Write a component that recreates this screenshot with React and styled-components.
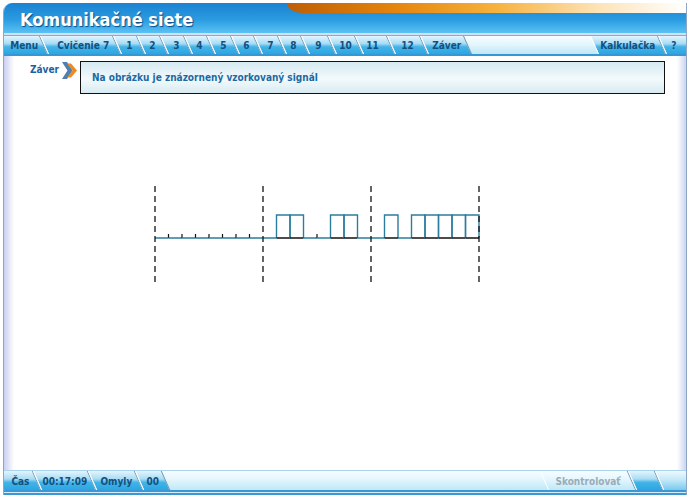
import React from "react";
import styled, { createGlobalStyle } from "styled-components";

const GlobalStyle = createGlobalStyle`
  html, body {
    margin: 0;
    padding: 0;
    background: #fff;
  }
  body {
    font-family: "DejaVu Sans Condensed", "DejaVu Sans", "Liberation Sans", sans-serif;
    font-stretch: condensed;
  }
`;

const Frame = styled.div`
  box-sizing: border-box;
  width: 684px;
  height: 492px;
  margin: 3px 0 0 3px;
  border-left: 1px solid #8ea6c6;
  border-right: 1px solid #8ea6c6;
  border-top-left-radius: 9px;
  overflow: hidden;
  display: flex;
  flex-direction: column;
`;

const Header = styled.div`
  position: relative;
  flex: none;
  height: 30px;
  padding-left: 16px;
  display: flex;
  align-items: center;
  background: linear-gradient(#1b82d2, #2a9be1 55%, #5ac2f3);

  /* orange swoosh in the top right corner */
  &::after {
    content: "";
    position: absolute;
    top: 0;
    right: 0;
    left: 283px;
    height: 10px;
    border-bottom-left-radius: 16px 10px;
    background: linear-gradient(to right, #bd5e05, #e5860f 28%, #f6b13c 52%, #fde3b8 78%, #fff);
  }
`;

const Title = styled.h1`
  margin: 2px 0 0 0;
  font-size: 18px;
  font-weight: bold;
  color: #fff;
  text-shadow: 1px 1px 1px #0b4b86;
`;

const HeaderEdge = styled.div`
  flex: none;
  height: 2px;
  background: #d6def6;
  border-bottom: 1px solid #6fb4e2;
`;

const Bar = styled.div`
  flex: none;
  height: ${(p) => p.$h}px;
  display: flex;
  overflow: hidden;
  background: linear-gradient(#f7fdff, #e4f6fd 45%, #bfe7f8);
`;

const Spacer = styled.div`
  flex: 1;
`;

const gradients = {
  blue: "linear-gradient(#e2f5fd, #a9dcf4 42%, #44b3e7 60%, #2aa6e2)",
  light: "linear-gradient(#f7fdff, #e4f6fd 45%, #bfe7f8)",
  mid: "linear-gradient(#eef9fe, #c4e9f8 45%, #79c9ee)",
};

const Tab = styled.div`
  flex: none;
  box-sizing: border-box;
  width: ${(p) => p.$w}px;
  margin-left: ${(p) => p.$ml || 0}px;
  margin-right: ${(p) => p.$mr || 0}px;
  height: 100%;
  display: flex;
  align-items: center;
  justify-content: center;
  transform: skewX(24deg);
  background: ${(p) => gradients[p.$variant || "blue"]};
  border-left: 1px solid #fff;
  border-right: 1px solid #6d93ae;
`;

const TabLabel = styled.span`
  transform: skewX(-24deg);
  margin-top: 1px;
  font-size: 10px;
  font-weight: bold;
  white-space: nowrap;
  color: ${(p) => (p.$muted ? "#9aacb7" : "#13507f")};
  padding-left: ${(p) => p.$pl || 0}px;
  padding-right: ${(p) => p.$pr || 0}px;
`;

const BlueRule = styled.div`
  flex: none;
  height: 2px;
  background: #3497d6;
`;

const Body = styled.div`
  flex: 1;
  padding: 5px 21px 0 26px;
  background: linear-gradient(to right, #c9cff0, #fff 10px, #fff calc(100% - 9px), #cdd3f2);
  border-bottom: 1px solid #a9d3ee;
`;

const Row = styled.div`
  display: flex;
  align-items: flex-start;
`;

const Label = styled.span`
  margin-top: 3px;
  font-size: 10px;
  font-weight: bold;
  color: #1d5f9f;
`;

const Chevron = styled.svg`
  flex: none;
  margin: 1px 3px 0 3px;
`;

const Box = styled.div`
  flex: 1;
  box-sizing: border-box;
  height: 33px;
  padding-left: 11px;
  display: flex;
  align-items: center;
  border: 1px solid #111;
  background: linear-gradient(#d5e9f1, #f3fafc 55%, #d8ebf2);
  font-size: 10px;
  font-weight: bold;
  color: #1b6aa3;
`;

const Chart = styled.svg`
  display: block;
  margin: 88px 0 0 120px;
`;

const BottomEdge = styled.div`
  flex: none;
  height: 1px;
  border-top: 2px solid #3a98d6;
  border-bottom: 2px solid #3a98d6;
  background: #d8ecf8;
`;

const topTabs = [
  { label: "Menu", w: 45, ml: -5, pl: 5 },
  { label: "Cvičenie 7", w: 73, pl: 4 },
  { label: "1", w: 24 },
  { label: "2", w: 23 },
  { label: "3", w: 24 },
  { label: "4", w: 23 },
  { label: "5", w: 24 },
  { label: "6", w: 23 },
  { label: "7", w: 24 },
  { label: "8", w: 23 },
  { label: "9", w: 27 },
  { label: "10", w: 27 },
  { label: "11", w: 32, pr: 6 },
  { label: "12", w: 33 },
  { label: "Záver", w: 44 },
];

const bottomTabs = [
  { label: "Čas", w: 38, ml: -5, pl: 5 },
  { label: "00:17:09", w: 55 },
  { label: "Omyly", w: 47 },
  { label: "00", w: 27 },
];

const BIT = 13.5;
const X0 = 5;
const BASE = 56;
const TOP = 33;
const TEAL = "#2a7d9c";
const bits = "00000000" + "01100110" + "01011111";

function Signal() {
  const items = [];
  for (let i = 0; i < bits.length; i++) {
    const x = X0 + i * BIT;
    if (bits[i] === "1") {
      items.push(
        <path key={"p" + i} d={`M${x} ${BASE}V${TOP}H${x + BIT}V${BASE}`} fill="none" stroke={TEAL} strokeWidth="1.4" />,
        <line key={"b" + i} x1={x} y1={BASE} x2={x + BIT} y2={BASE} stroke="#111" strokeWidth="1.4" />
      );
    } else {
      items.push(<line key={"z" + i} x1={x} y1={BASE} x2={x + BIT} y2={BASE} stroke={TEAL} strokeWidth="1.4" />);
    }
    const next = bits[i + 1];
    if (bits[i] === "0" && next === "0" && (i + 1) % 8 !== 0) {
      items.push(<line key={"t" + i} x1={x + BIT} y1={BASE - 4} x2={x + BIT} y2={BASE} stroke="#111" strokeWidth="1.2" />);
    }
  }
  const dashes = [0, 8, 16, 24].map((k) => (
    <line key={"d" + k} x1={X0 + k * BIT} y1="4" x2={X0 + k * BIT} y2="100" stroke="#111" strokeWidth="1.3" strokeDasharray="6 4" />
  ));
  return (
    <Chart width="340" height="104" viewBox="0 0 340 104">
      {items}
      {dashes}
    </Chart>
  );
}

export default function App() {
  return (
    <>
      <GlobalStyle />
      <Frame>
        <Header>
          <Title>Komunikačné siete</Title>
        </Header>
        <HeaderEdge />
        <Bar $h={18}>
          {topTabs.map((t) => (
            <Tab key={t.label} $w={t.w} $ml={t.ml}>
              <TabLabel $pl={t.pl} $pr={t.pr}>{t.label}</TabLabel>
            </Tab>
          ))}
          <Spacer />
          <Tab $w={68}>
            <TabLabel>Kalkulačka</TabLabel>
          </Tab>
          <Tab $w={29} $mr={-5}>
            <TabLabel $pr={5}>?</TabLabel>
          </Tab>
        </Bar>
        <BlueRule />
        <Body>
          <Row>
            <Label>Záver</Label>
            <Chevron width="15" height="17" viewBox="0 0 15 17">
              <polygon points="0,0 5,0 10.5,8.5 5,17 0,17 5.5,8.5" fill="#4f7fb0" />
              <polygon points="5,1.5 9,1.5 15,8.5 9,15.5 5,15.5 10.5,8.5" fill="#ef8a22" />
            </Chevron>
            <Box>Na obrázku je znázornený vzorkovaný signál</Box>
          </Row>
          <Signal />
        </Body>
        <Bar $h={19}>
          {bottomTabs.map((t) => (
            <Tab key={t.label} $w={t.w} $ml={t.ml}>
              <TabLabel $pl={t.pl}>{t.label}</TabLabel>
            </Tab>
          ))}
          <Spacer />
          <Tab $w={88} $variant="light">
            <TabLabel $muted>Skontrolovať</TabLabel>
          </Tab>
          <Tab $w={27} />
          <Tab $w={32} $mr={-5} $variant="mid" />
        </Bar>
        <BottomEdge />
      </Frame>
    </>
  );
}
